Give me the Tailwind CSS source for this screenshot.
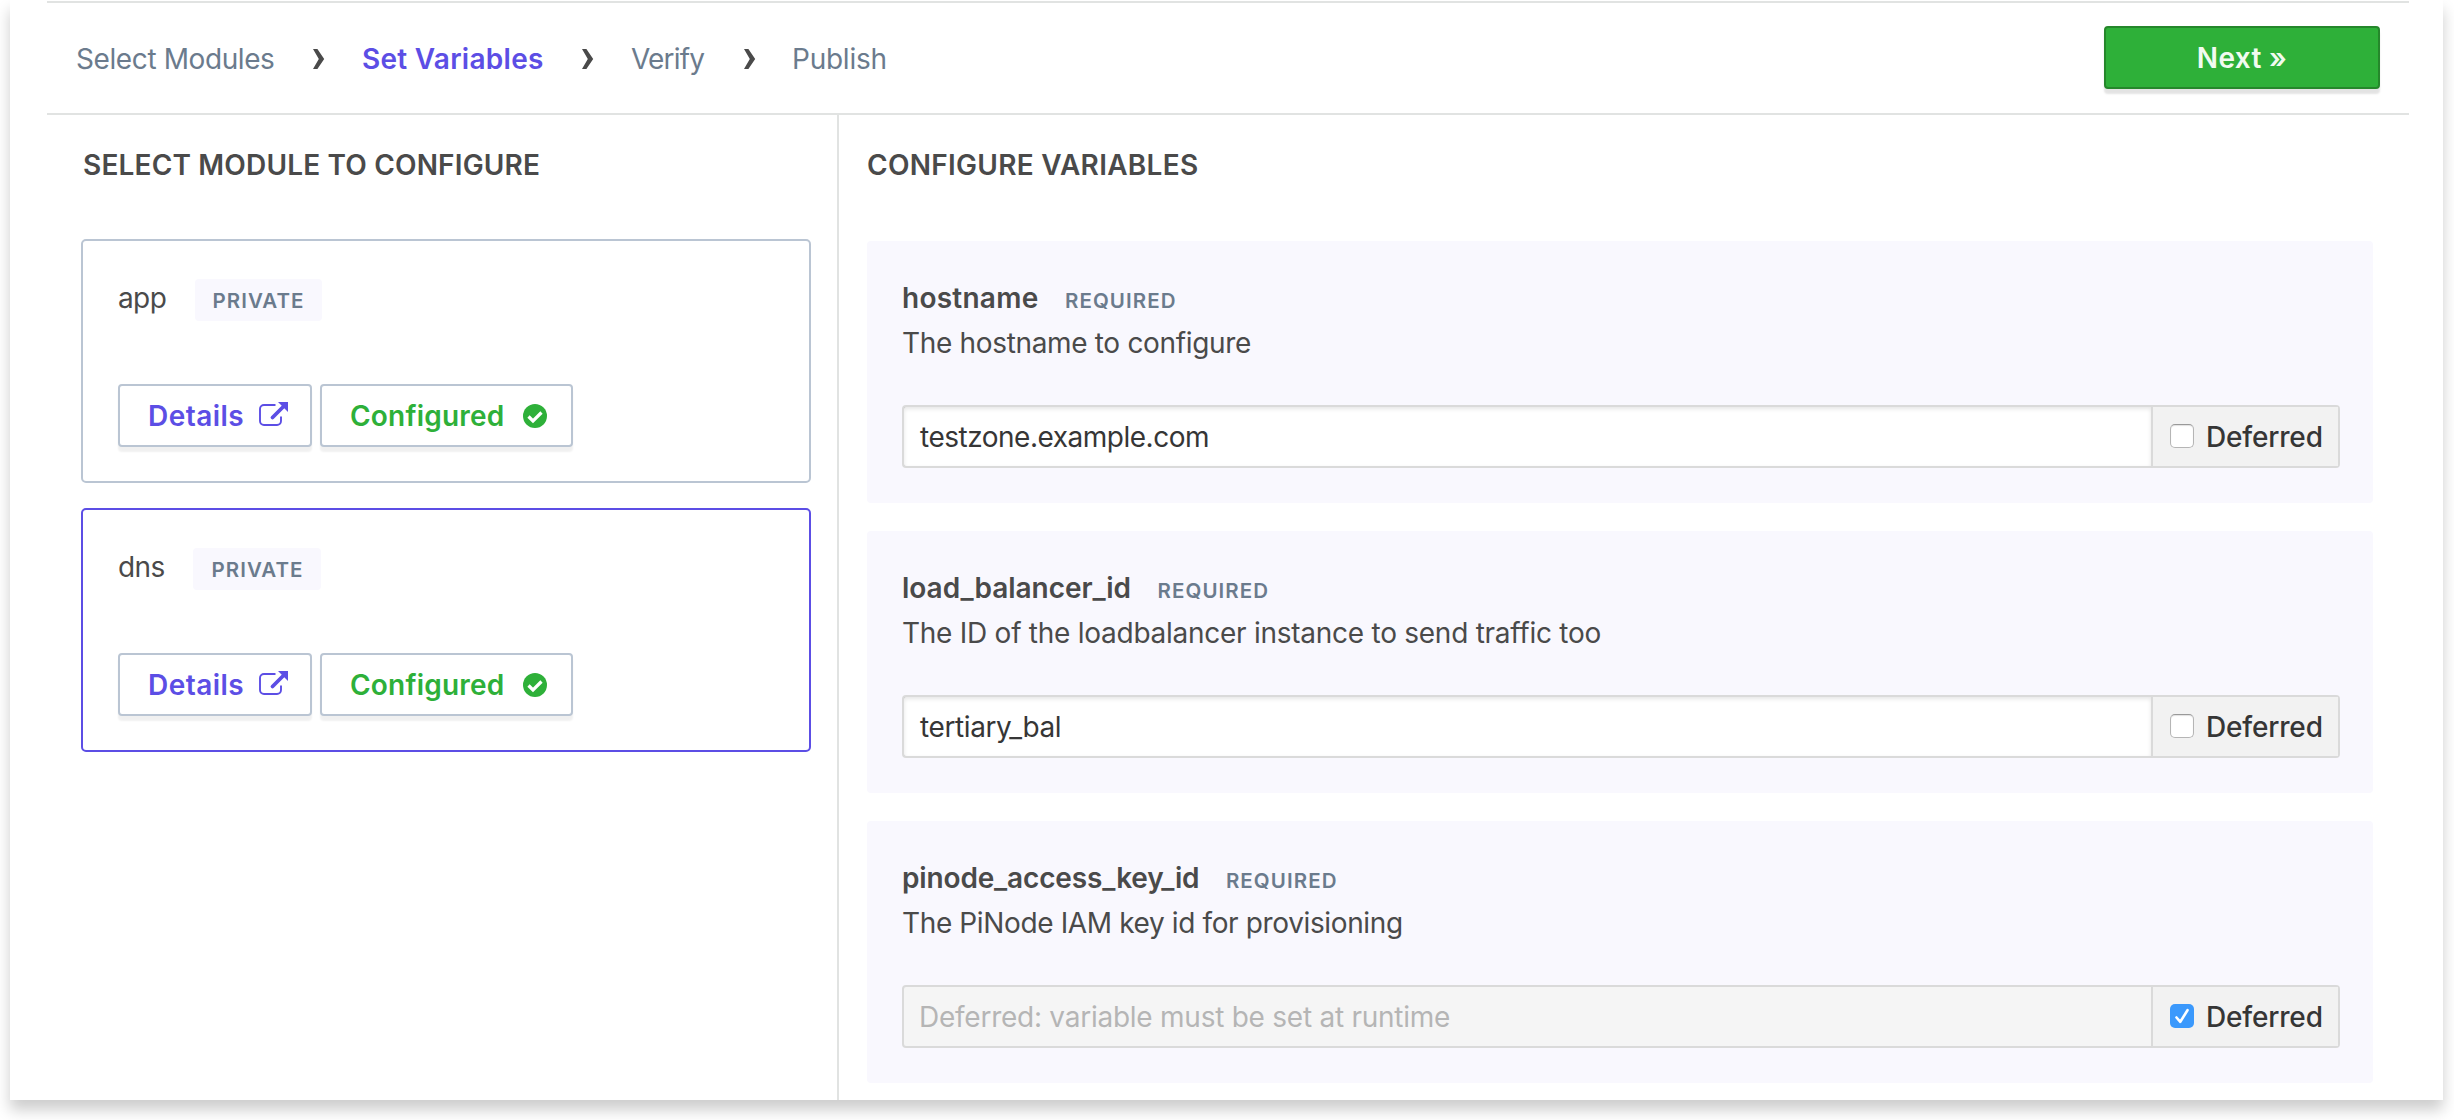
<!DOCTYPE html>
<html lang="en">
<head>
<meta charset="utf-8">
<title>Set Variables</title>
<script src="https://cdn.jsdelivr.net/npm/@tailwindcss/browser@4"></script>
</head>
<body class="h-[1120px] overflow-hidden bg-white font-['Inter',sans-serif] text-[28px] leading-[42px] text-[#4a4a4a]">
<svg class="hidden">
  <symbol id="chevron" viewBox="0 0 12 22"><path d="M0 1h4.4l6.8 10-6.8 10H0l5.8-10z" fill="currentColor"/></symbol>
  <symbol id="external" viewBox="0 0 30 26"><path d="M16.5 4H5a4 4 0 0 0-4 4v12a4 4 0 0 0 4 4h13a4 4 0 0 0 4-4v-4.500" fill="none" stroke="currentColor" stroke-width="1.900"/><path d="M13.500 16.500 25 5" stroke="currentColor" stroke-width="3.800" stroke-linecap="round"/><path d="M19 1h10v10z" fill="currentColor"/></symbol>
  <symbol id="check" viewBox="0 0 24 24"><circle cx="12" cy="12" r="12" fill="currentColor"/><path d="m5.500 12.500 4.500 4.500 8.500-8.500" fill="none" stroke="#fff" stroke-width="3.200"/></symbol>
</svg>
<div class="ml-[10px] flex h-[1100px] w-[2433px] flex-col bg-white px-[37px] pt-px shadow-[0_10px_14px_rgba(0,0,0,0.2)]">
  <header class="flex h-[114px] w-[2362px] shrink-0 items-start justify-between border-y-2 border-[#e1e3e2]">
    <nav class="flex items-center pt-[35px] pl-[29px] tracking-[-0.4px] whitespace-nowrap text-[#6b7b8d]">
      <a class="w-[237px]">Select Modules</a>
      <svg class="h-[22px] w-[12px] text-[#4a4a4a]"><use href="#chevron"/></svg>
      <a class="w-[257px] pl-[37px] font-semibold tracking-[0.27px] text-[#5c4ee5]">Set Variables</a>
      <svg class="h-[22px] w-[12px] text-[#4a4a4a]"><use href="#chevron"/></svg>
      <a class="w-[150px] pl-[37px] tracking-[-0.8px]">Verify</a>
      <svg class="h-[22px] w-[12px] text-[#4a4a4a]"><use href="#chevron"/></svg>
      <a class="pl-[36px] tracking-[-0.24px]">Publish</a>
    </nav>
    <button class="mt-[23px] mr-[29px] h-[63px] w-[276px] rounded-[4px] border-2 border-[#25872b] bg-[#2eb039] font-semibold tracking-[0.35px] text-[#f1fbf0] shadow-[0_5px_2px_rgba(0,0,0,0.11)]">Next »</button>
  </header>
  <main class="flex w-[2362px] grow">
    <section class="w-[792px] shrink-0 border-r-2 border-[#e1e3e2] pt-[29px] pl-[34px]">
      <h2 class="pl-[2px] font-semibold tracking-[0.17px]">SELECT MODULE TO CONFIGURE</h2>
      <div class="mt-[53px] flex flex-col gap-[25px]">
        <article class="h-[244px] w-[730px] rounded-[5px] border-2 border-[#bac5d3] pt-[36px] pl-[35px]">
          <div class="flex items-start">
            <span class="w-[77px] tracking-[-0.6px]">app</span>
            <span class="mt-[2px] h-[42px] w-[127px] rounded-[4px] bg-[#f9f8fe] pl-[17.500px] text-[20.500px] leading-[43px] font-semibold tracking-[1.05px] text-[#6b7b8d]">PRIVATE</span>
          </div>
          <div class="mt-[63px] flex gap-[8px] font-semibold">
            <button class="flex h-[63px] w-[194px] items-center justify-between rounded-[4px] border-2 border-[#bac5d3] bg-white pr-[21px] pl-[28px] tracking-[0.45px] text-[#5c4ee5] shadow-[0_5px_2px_rgba(0,0,0,0.06)]">Details<svg class="-mt-[3px] h-[26px] w-[30px]"><use href="#external"/></svg></button>
            <button class="flex h-[63px] w-[253px] items-center justify-between rounded-[4px] border-2 border-[#bac5d3] bg-white pr-[24px] pl-[28px] tracking-[0.21px] text-[#2eb039] shadow-[0_5px_2px_rgba(0,0,0,0.06)]">Configured<svg class="h-[24px] w-[24px]"><use href="#check"/></svg></button>
          </div>
        </article>
        <article class="h-[244px] w-[730px] rounded-[5px] border-2 border-[#5c4ee5] pt-[36px] pl-[35px]">
          <div class="flex items-start">
            <span class="w-[75px] tracking-[-0.6px]">dns</span>
            <span class="mt-[2px] h-[42px] w-[128px] rounded-[4px] bg-[#f9f8fe] pl-[18.500px] text-[20.500px] leading-[43px] font-semibold tracking-[1.05px] text-[#6b7b8d]">PRIVATE</span>
          </div>
          <div class="mt-[63px] flex gap-[8px] font-semibold">
            <button class="flex h-[63px] w-[194px] items-center justify-between rounded-[4px] border-2 border-[#bac5d3] bg-white pr-[21px] pl-[28px] tracking-[0.45px] text-[#5c4ee5] shadow-[0_5px_2px_rgba(0,0,0,0.06)]">Details<svg class="-mt-[3px] h-[26px] w-[30px]"><use href="#external"/></svg></button>
            <button class="flex h-[63px] w-[253px] items-center justify-between rounded-[4px] border-2 border-[#bac5d3] bg-white pr-[24px] pl-[28px] tracking-[0.21px] text-[#2eb039] shadow-[0_5px_2px_rgba(0,0,0,0.06)]">Configured<svg class="h-[24px] w-[24px]"><use href="#check"/></svg></button>
          </div>
        </article>
      </div>
    </section>
    <section class="pt-[29px] pl-[28px]">
      <h2 class="font-semibold tracking-[0.29px]">CONFIGURE VARIABLES</h2>
      <div class="mt-[55px] flex flex-col gap-[28px]">
        <div class="h-[262px] w-[1506px] rounded-[4px] bg-[#f9f8fe] pt-[36px] pr-[33px] pl-[35px]">
          <div class="flex h-[42px] items-baseline gap-[26.500px] font-semibold"><span class="tracking-[0.25px]">hostname</span><span class="text-[20.500px] tracking-[1.08px] text-[#6b7b8d]">REQUIRED</span></div>
          <p class="mt-[3px] tracking-[-0.33px]">The hostname to configure</p>
          <div class="mt-[41px] flex h-[63px] rounded-[4px] border-2 border-[#dadada] bg-white text-[#363636]">
            <div class="flex grow items-center pl-[16px] tracking-[-0.49px] shadow-[inset_0_2px_4px_rgba(10,10,10,0.1)]">testzone.example.com</div>
            <label class="flex w-[187px] items-center gap-[12px] border-l-2 border-[#dadada] bg-[#f2f2f2] pl-[17px] font-medium tracking-[-0.18px]"><span class="-mt-px h-[24px] w-[24px] rounded-[5px] border border-[#b5b5b5] border-t-[#999] bg-white shadow-[inset_0_1px_1px_rgba(0,0,0,0.12)]"></span>Deferred</label>
          </div>
        </div>
        <div class="h-[262px] w-[1506px] rounded-[4px] bg-[#f9f8fe] pt-[36px] pr-[33px] pl-[35px]">
          <div class="flex h-[42px] items-baseline gap-[26.500px] font-semibold"><span class="tracking-[-0.03px]">load_balancer_id</span><span class="text-[20.500px] tracking-[1.08px] text-[#6b7b8d]">REQUIRED</span></div>
          <p class="mt-[3px] tracking-[-0.26px]">The ID of the loadbalancer instance to send traffic too</p>
          <div class="mt-[41px] flex h-[63px] rounded-[4px] border-2 border-[#dadada] bg-white text-[#363636]">
            <div class="flex grow items-center pl-[16px] tracking-[-0.4px] shadow-[inset_0_2px_4px_rgba(10,10,10,0.1)]">tertiary_bal</div>
            <label class="flex w-[187px] items-center gap-[12px] border-l-2 border-[#dadada] bg-[#f2f2f2] pl-[17px] font-medium tracking-[-0.18px]"><span class="-mt-px h-[24px] w-[24px] rounded-[5px] border border-[#b5b5b5] border-t-[#999] bg-white shadow-[inset_0_1px_1px_rgba(0,0,0,0.12)]"></span>Deferred</label>
          </div>
        </div>
        <div class="h-[262px] w-[1506px] rounded-[4px] bg-[#f9f8fe] pt-[36px] pr-[33px] pl-[35px]">
          <div class="flex h-[42px] items-baseline gap-[26.500px] font-semibold"><span class="tracking-[-0.15px]">pinode_access_key_id</span><span class="text-[20.500px] tracking-[1.08px] text-[#6b7b8d]">REQUIRED</span></div>
          <p class="mt-[3px] tracking-[-0.37px]">The PiNode IAM key id for provisioning</p>
          <div class="mt-[41px] flex h-[63px] rounded-[4px] border-2 border-[#dadada] bg-[#f5f5f5] text-[#363636]">
            <div class="flex grow items-center pl-[15px] tracking-[-0.25px] text-[#b5b5b5]">Deferred: variable must be set at runtime</div>
            <label class="flex w-[187px] items-center gap-[12px] border-l-2 border-[#dadada] bg-[#f2f2f2] pl-[17px] font-medium tracking-[-0.18px]"><span class="-mt-px h-[24px] w-[24px] rounded-[5px] bg-[#3b99fc]"><svg class="h-[24px] w-[24px]" viewBox="0 0 24 24"><path d="m6.500 13.500 3.800 4.300 7.200-11.600" fill="none" stroke="#fff" stroke-width="2.600" stroke-linecap="round" stroke-linejoin="round"/></svg></span>Deferred</label>
          </div>
        </div>
      </div>
    </section>
  </main>
</div>
</body>
</html>
